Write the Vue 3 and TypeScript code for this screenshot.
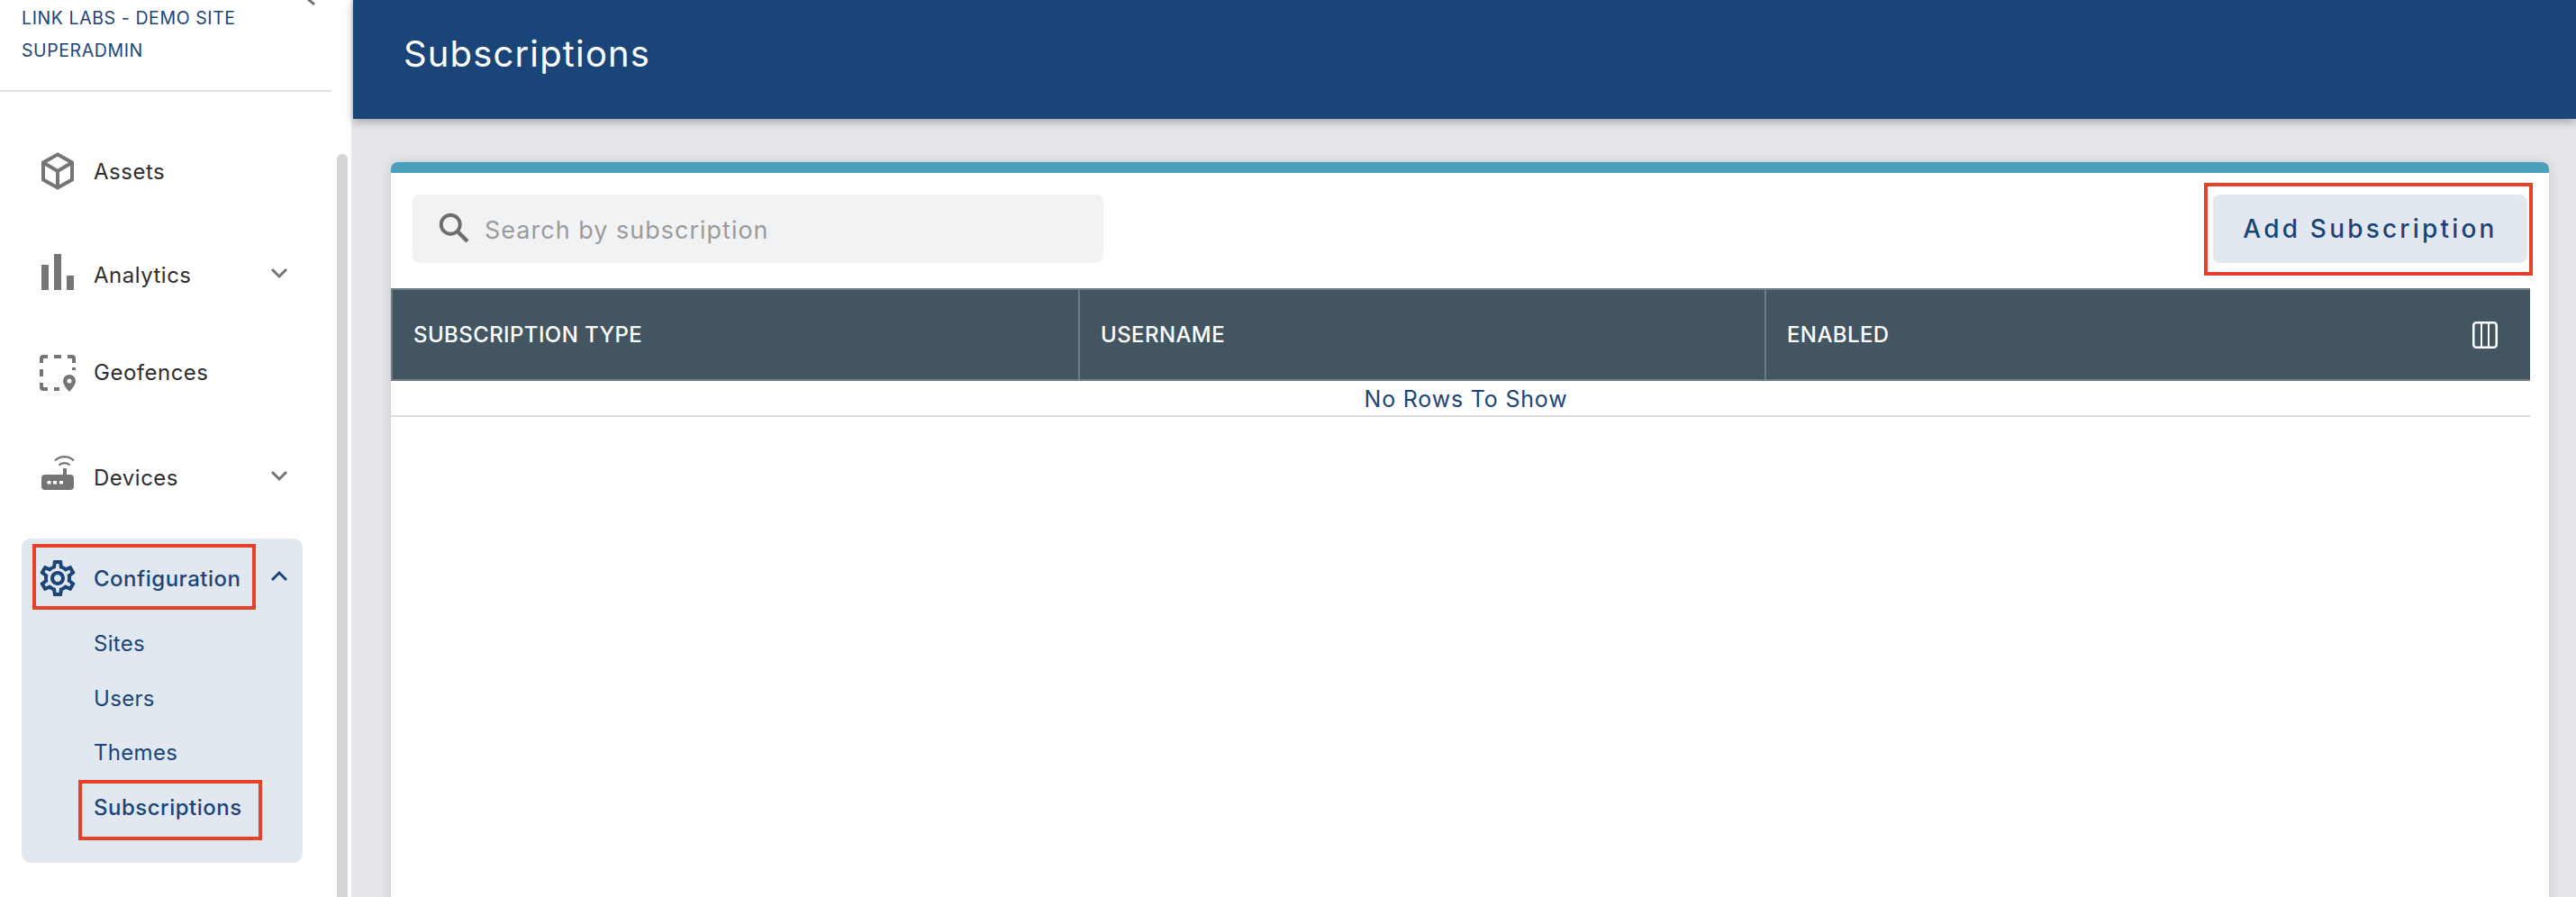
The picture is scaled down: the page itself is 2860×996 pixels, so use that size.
<script setup lang="ts">
interface NavItem {
  label: string
  icon: string
  gap: number
  chevron?: boolean
}

const navItems: NavItem[] = [
  { label: 'Assets', icon: 'cube', gap: 60 },
  { label: 'Analytics', icon: 'bars', gap: 59, chevron: true },
  { label: 'Geofences', icon: 'fence', gap: 52 },
  { label: 'Devices', icon: 'router', gap: 61, chevron: true },
]

const subItems = ['Sites', 'Users', 'Themes', 'Subscriptions']
const columns = ['SUBSCRIPTION TYPE', 'USERNAME', 'ENABLED']
</script>

<template>
  <div class="page">
    <aside class="sidebar">
      <svg class="sidebar__search" width="12" height="6" viewBox="0 0 12 6">
        <path d="M2-1 9 5" fill="none" stroke="#757575" stroke-width="3" />
      </svg>
      <div class="account">
        <div>LINK LABS - DEMO SITE</div>
        <div>SUPERADMIN</div>
      </div>

      <nav class="nav">
        <a
          v-for="item in navItems"
          :key="item.label"
          class="nav-item"
          :style="{ marginTop: item.gap + 'px' }"
        >
          <svg class="nav-item__icon" viewBox="0 0 48 48">
            <g v-if="item.icon === 'cube'" fill="none" stroke="#757575" stroke-width="4">
              <path d="M24 5.500 40 14.500V33.500L24 42.500 8 33.500V14.500Z" />
              <path d="M8 14.500 24 24 40 14.500M24 24V42.500" />
            </g>
            <g v-else-if="item.icon === 'bars'" fill="#757575">
              <rect x="6" y="13" width="8" height="28" />
              <rect x="20" y="1" width="8" height="40" />
              <rect x="34" y="25" width="8" height="16" />
            </g>
            <g v-else-if="item.icon === 'fence'">
              <path
                d="M6 14V9a2 2 0 0 1 2-2h5M20 7h8M35 7h5a2 2 0 0 1 2 2v5M6 21v8M42 19v3M6 36v5a2 2 0 0 0 2 2h5M20 43h6"
                fill="none"
                stroke="#757575"
                stroke-width="4"
              />
              <path
                fill="#757575"
                fill-rule="evenodd"
                d="M37 27a7 7 0 0 0-7 7c0 5 7 12 7 12s7-7 7-12a7 7 0 0 0-7-7Zm0 4.500a2.500 2.500 0 1 1 0 5 2.500 2.500 0 0 1 0-5Z"
              />
            </g>
            <g v-else>
              <rect x="6" y="21" width="36" height="17" rx="4" fill="#757575" />
              <rect x="30" y="14" width="4" height="8" fill="#757575" />
              <rect x="12.500" y="28" width="4" height="3.500" fill="#fff" />
              <rect x="19" y="28" width="4" height="3.500" fill="#fff" />
              <rect x="26" y="28" width="4" height="3.500" fill="#fff" />
              <path
                d="M21 5.500a15 15 0 0 1 21 0M25.500 10.500a9 9 0 0 1 12 0"
                fill="none"
                stroke="#757575"
                stroke-width="2.200"
              />
            </g>
          </svg>
          <span class="nav-item__label">{{ item.label }}</span>
          <svg v-if="item.chevron" class="chevron" viewBox="0 0 24 24">
            <path d="M4 8 12 16 20 8" fill="none" stroke="#757575" stroke-width="3" />
          </svg>
        </a>

        <div class="group">
          <a class="nav-item nav-item--active">
            <svg class="nav-item__icon" viewBox="0 0 24 24">
              <path
                fill="#1b4579"
                d="M19.43 12.98c.04-.32.07-.64.07-.98 0-.34-.03-.66-.07-.98l2.11-1.65c.19-.15.24-.42.12-.64l-2-3.46c-.09-.16-.26-.25-.44-.25-.06 0-.12.01-.17.03l-2.49 1c-.52-.4-1.08-.73-1.69-.98l-.38-2.65C14.46 2.18 14.25 2 14 2h-4c-.25 0-.46.18-.49.42l-.38 2.65c-.61.25-1.17.59-1.69.98l-2.49-1c-.06-.02-.12-.03-.18-.03-.17 0-.34.09-.43.25l-2 3.46c-.13.22-.07.49.12.64l2.11 1.65c-.04.32-.07.65-.07.98 0 .33.03.66.07.98l-2.11 1.65c-.19.15-.24.42-.12.64l2 3.46c.09.16.26.25.44.25.06 0 .12-.01.17-.03l2.49-1c.52.4 1.08.73 1.69.98l.38 2.65c.03.24.24.42.49.42h4c.25 0 .46-.18.49-.42l.38-2.65c.61-.25 1.17-.59 1.69-.98l2.49 1c.06.02.12.03.18.03.17 0 .34-.09.43-.25l2-3.46c.12-.22.07-.49-.12-.64l-2.11-1.65zm-1.98-1.71c.04.31.05.52.05.73 0 .21-.02.43-.05.73l-.14 1.13.89.7 1.08.84-.7 1.21-1.27-.51-1.04-.42-.9.68c-.43.32-.84.56-1.25.73l-1.06.43-.16 1.13-.2 1.35h-1.4l-.19-1.35-.16-1.13-1.06-.43c-.43-.18-.83-.41-1.23-.71l-.91-.7-1.06.43-1.27.51-.7-1.21 1.08-.84.89-.7-.14-1.13c-.03-.31-.05-.54-.05-.74s.02-.43.05-.73l.14-1.13-.89-.7-1.08-.84.7-1.21 1.27.51 1.04.42.9-.68c.43-.32.84-.56 1.25-.73l1.06-.43.16-1.13.2-1.35h1.39l.19 1.35.16 1.13 1.06.43c.43.18.83.41 1.23.71l.91.7 1.06-.43 1.27-.51.7 1.21-1.07.85-.89.7.14 1.13zM12 8c-2.21 0-4 1.79-4 4s1.79 4 4 4 4-1.79 4-4-1.79-4-4-4zm0 6c-1.1 0-2-.9-2-2s.9-2 2-2 2 .9 2 2-.9 2-2 2z"
              />
            </svg>
            <span class="nav-item__label">Configuration</span>
            <svg class="chevron" viewBox="0 0 24 24">
              <path d="M4 16 12 8 20 16" fill="none" stroke="#1b4579" stroke-width="3" />
            </svg>
          </a>
          <div class="sub-list">
            <a
              v-for="sub in subItems"
              :key="sub"
              class="sub-item"
              :class="{ 'sub-item--active': sub === 'Subscriptions' }"
            >{{ sub }}</a>
          </div>
          <span class="mark mark--config"></span>
          <span class="mark mark--sub"></span>
        </div>
      </nav>

      <div class="scrollbar"></div>
    </aside>

    <main class="main">
      <header class="topbar">Subscriptions</header>

      <section class="content">
        <div class="card">
          <div class="toolbar">
            <label class="search">
              <svg class="search__icon" viewBox="0 0 24 24">
                <circle cx="9.500" cy="9.500" r="7" fill="none" stroke="#6e6e6e" stroke-width="2.600" />
                <path d="M14.500 14.500 22 22" fill="none" stroke="#6e6e6e" stroke-width="3" />
              </svg>
              <input class="search__input" type="text" placeholder="Search by subscription" />
            </label>
            <div class="add-wrap">
              <button class="add-btn" type="button">Add Subscription</button>
              <span class="mark mark--add"></span>
            </div>
          </div>

          <div class="table">
            <div class="table__head">
              <div v-for="col in columns" :key="col" class="table__cell">{{ col }}</div>
              <svg class="table__cols" viewBox="0 0 28 30">
                <rect x="1.250" y="1.250" width="25.500" height="27.500" rx="3" fill="none" stroke="#fff" stroke-width="2.500" />
                <path d="M10 1v28M18 1v28" stroke="#fff" stroke-width="2" />
              </svg>
            </div>
            <div class="table__empty">No Rows To Show</div>
          </div>
        </div>
      </section>
    </main>
  </div>
</template>

<style scoped>
.page {
  display: flex;
  height: 996px;
  overflow: hidden;
  background: #e4e6ea;
  font-family: Inter, "Liberation Sans", sans-serif;
  color: #1b4579;
}

.sidebar {
  position: relative;
  flex: 0 0 390px;
  background: #fff;
}

.sidebar__search {
  position: absolute;
  top: 0;
  left: 340px;
}

.account {
  width: 344px;
  height: 98px;
  padding: 2px 0 0 24px;
  border-bottom: 2px solid #e0e0e0;
  font-size: 19.500px;
  letter-spacing: 0.6px;
  line-height: 36px;
}

.nav {
  width: 312px;
  margin-left: 24px;
}

.nav-item {
  display: flex;
  align-items: center;
  height: 56px;
  padding: 0 14px 0 16px;
  color: #2e2e2e;
  font-size: 24px;
  letter-spacing: 0.5px;
}

.nav-item__icon {
  flex: none;
  width: 48px;
  height: 48px;
}

.nav-item__label {
  margin-left: 16px;
  flex: 1;
  white-space: nowrap;
}

.chevron {
  flex: none;
  width: 24px;
  height: 24px;
  margin-top: -5px;
}

.group {
  position: relative;
  margin-top: 40px;
  height: 360px;
  padding-top: 16px;
  box-sizing: border-box;
  background: #e2e8ef;
  border-radius: 10px;
}

.nav-item--active {
  color: #1b4579;
  font-weight: 500;
}

.sub-list {
  display: flex;
  flex-direction: column;
  margin-top: 15px;
}

.sub-item {
  height: 60.500px;
  padding-left: 80px;
  font-size: 24px;
  line-height: 60px;
  letter-spacing: 0.3px;
}

.sub-item--active {
  font-weight: 500;
  letter-spacing: 0.5px;
}

.mark {
  position: absolute;
  box-sizing: border-box;
  border: 4px solid #e8412a;
}

.mark--config {
  top: 6px;
  left: 12px;
  width: 248px;
  height: 73px;
}

.mark--sub {
  top: 268px;
  left: 63px;
  width: 204px;
  height: 67px;
}

.scrollbar {
  position: absolute;
  top: 171px;
  right: 4px;
  bottom: -10px;
  width: 12px;
  background: #d6d6d6;
  border-radius: 6px;
}

.main {
  flex: 1;
  min-width: 0;
  display: flex;
  flex-direction: column;
  margin-left: 2px;
}

.topbar {
  flex: none;
  position: relative;
  height: 132px;
  padding-left: 56px;
  background: #1b4579;
  box-shadow: 0 3px 10px rgba(0, 0, 0, 0.3);
  color: #fff;
  font-size: 40px;
  letter-spacing: 1.150px;
  line-height: 120px;
}

.content {
  flex: 1;
  padding: 48px 30px 0 42px;
}

.card {
  height: 100%;
  background: #fff;
  border-top: 12px solid #4a9fbc;
  border-radius: 8px 8px 0 0;
  box-shadow: 0 0 12px rgba(0, 0, 0, 0.15);
}

.toolbar {
  display: flex;
  justify-content: space-between;
  height: 128px;
  padding: 24px 24px 0;
  box-sizing: border-box;
}

.search {
  display: flex;
  align-items: center;
  width: 767px;
  height: 76px;
  padding-left: 28px;
  box-sizing: border-box;
  background: #f1f2f4;
  border-radius: 8px;
}

.search__icon {
  flex: none;
  width: 36px;
  height: 36px;
  margin-top: -2px;
}

.search__input {
  flex: 1;
  min-width: 0;
  margin: 2px 0 0 16px;
  padding: 0;
  border: 0;
  outline: 0;
  background: transparent;
  font: inherit;
  font-size: 27px;
  letter-spacing: 1px;
  color: #333;
}

.search__input::placeholder {
  color: #9b9b9b;
  opacity: 1;
}

.add-wrap {
  position: relative;
  height: 76px;
}

.add-btn {
  display: block;
  width: 349px;
  height: 76px;
  border: 0;
  border-radius: 8px;
  background: #e2e8ef;
  color: #1b4579;
  font: inherit;
  font-size: 28px;
  font-weight: 500;
  letter-spacing: 3.200px;
}

.mark--add {
  top: -13px;
  left: -10px;
  width: 365px;
  height: 103px;
}

.table {
  width: 2375px;
}

.table__head {
  position: relative;
  display: grid;
  grid-template-columns: 761px 762px 1fr;
  height: 103px;
  box-sizing: border-box;
  background: #425560;
  border: 2px solid #6f7d87;
  border-right: 0;
}

.table__cell {
  padding-left: 23px;
  border-left: 2px solid #6f7d87;
  color: #fff;
  font-size: 24px;
  font-weight: 500;
  letter-spacing: 0.4px;
  line-height: 99px;
}

.table__cell:first-child {
  border-left: 0;
}

.table__cols {
  position: absolute;
  top: 35px;
  right: 36px;
  width: 28px;
  height: 30px;
}

.table__empty {
  height: 40px;
  padding: 1px 0 0 12px;
  box-sizing: border-box;
  border-bottom: 2px solid #dcdcdc;
  font-size: 25px;
  letter-spacing: 0.8px;
  line-height: 38px;
  text-align: center;
}
</style>
